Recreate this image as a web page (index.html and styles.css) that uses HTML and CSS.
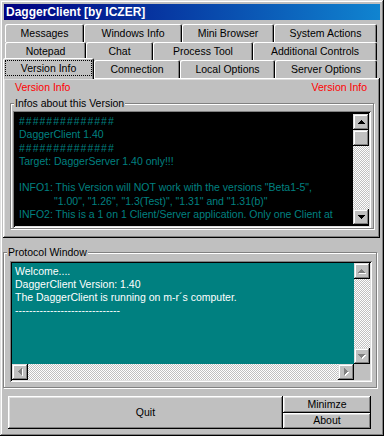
FILE: index.html
```html
<!DOCTYPE html>
<html lang="en">
<head>
    <meta charset="UTF-8">
    <title>DaggerClient [by ICZER]</title>
    <link rel="stylesheet" href="styles.css">
</head>
<body>
    <div class="window">
        <div class="titlebar">DaggerClient [by ICZER]</div>

        <div class="tabs">
            <div class="tab-row row1">
                <div class="tab">Messages</div>
                <div class="tab">Windows Info</div>
                <div class="tab">Mini Browser</div>
                <div class="tab">System Actions</div>
            </div>
            <div class="tab-row row2">
                <div class="tab">Notepad</div>
                <div class="tab">Chat</div>
                <div class="tab">Process Tool</div>
                <div class="tab">Additional Controls</div>
            </div>
            <div class="tab-row row3">
                <div class="tab active"><span class="focus">Version Info</span></div>
                <div class="tab">Connection</div>
                <div class="tab">Local Options</div>
                <div class="tab">Server Options</div>
            </div>
        </div>

        <div class="panel">
            <div class="red-labels">
                <span>Version Info</span>
                <span>Version Info</span>
            </div>
            <fieldset class="group info-group">
                <legend>Infos about this Version</legend>
                <div class="memo info-memo">
                    <div class="memo-text"><span class="hash">##############</span>
DaggerClient 1.40
<span class="hash">##############</span>
Target: DaggerServer 1.40 only!!!

INFO1: This Version will NOT work with the versions "Beta1-5",
            "1.00", "1.26", "1.3(Test)", "1.31" and "1.31(b)"
INFO2: This is a 1 on 1 Client/Server application. Only one Client at</div>
                    <div class="vscroll">
                        <div class="sbtn"><svg width="7" height="4" viewBox="0 0 7 4"><path d="M3 0h1v1h-1z M2 1h3v1h-3z M1 2h5v1h-5z M0 3h7v1h-7z" fill="#000"/></svg></div>
                        <div class="sbtn"></div>
                        <div class="track"></div>
                        <div class="sbtn"><svg width="7" height="4" viewBox="0 0 7 4"><path d="M0 0h7v1h-7z M1 1h5v1h-5z M2 2h3v1h-3z M3 3h1v1h-1z" fill="#000"/></svg></div>
                    </div>
                </div>
            </fieldset>
        </div>

        <fieldset class="group protocol-group">
            <legend>Protocol Window</legend>
            <div class="memo protocol-memo">
                <div class="memo-text">Welcome....
DaggerClient Version: 1.40
The DaggerClient is running on m-r´s computer.
------------------------------</div>
                <div class="vscroll">
                    <div class="sbtn"><svg width="8" height="5" viewBox="0 0 8 5"><path d="M4 1h1v1h-1z M3 2h3v1h-3z M2 3h5v1h-5z M1 4h7v1h-7z" fill="#fff"/><path d="M3 0h1v1h-1z M2 1h3v1h-3z M1 2h5v1h-5z M0 3h7v1h-7z" fill="#808080"/></svg></div>
                    <div class="track"></div>
                    <div class="sbtn"><svg width="8" height="5" viewBox="0 0 8 5"><path d="M1 1h7v1h-7z M2 2h5v1h-5z M3 3h3v1h-3z M4 4h1v1h-1z" fill="#fff"/><path d="M0 0h7v1h-7z M1 1h5v1h-5z M2 2h3v1h-3z M3 3h1v1h-1z" fill="#808080"/></svg></div>
                </div>
                <div class="hscroll">
                    <div class="sbtn"><svg width="5" height="8" viewBox="0 0 5 8"><path d="M1 4h1v1h-1z M2 3h1v3h-1z M3 2h1v5h-1z M4 1h1v7h-1z" fill="#fff"/><path d="M0 3h1v1h-1z M1 2h1v3h-1z M2 1h1v5h-1z M3 0h1v7h-1z" fill="#808080"/></svg></div>
                    <div class="track"></div>
                    <div class="sbtn"><svg width="5" height="8" viewBox="0 0 5 8"><path d="M1 1h1v7h-1z M2 2h1v5h-1z M3 3h1v3h-1z M4 4h1v1h-1z" fill="#fff"/><path d="M0 0h1v7h-1z M1 1h1v5h-1z M2 2h1v3h-1z M3 3h1v1h-1z" fill="#808080"/></svg></div>
                </div>
                <div class="corner"></div>
            </div>
        </fieldset>

        <div class="buttons">
            <div class="btn quit">Quit</div>
            <div class="btn-stack">
                <div class="btn">Minimze</div>
                <div class="btn">About</div>
            </div>
        </div>
    </div>
</body>
</html>
```
FILE: styles.css
```css
* { box-sizing: border-box;}

body {
    margin: 0;
    background: #c0c0c0;
}

.window {
    width: 384px;
    height: 436px;
    padding: 3px;
    display: flex;
    flex-direction: column;
    background: #c0c0c0;
    font-family: "Liberation Sans", Arial, sans-serif;
    font-size: 10.5px;
    line-height: 13px;
    color: #000;
    box-shadow: inset -1px -1px #000, inset 1px 1px #dfdfdf, inset -2px -2px #808080, inset 2px 2px #fff;
}

.titlebar {
    height: 16px;
    margin: 1px 1px 0;
    padding-left: 2px;
    background: linear-gradient(to right, #000080, #1084d0);
    color: #fff;
    font-weight: bold;
    font-size: 12px;
    line-height: 16px;
}

/* tabs */
.tabs {
    margin-top: 4px;
    position: relative;
    z-index: 1;
}

.tab-row {
    display: flex;
    height: 18px;
    padding: 0 4px 0 2px;
}

.tab {
    flex: none;
    height: 18px;
    text-align: center;
    line-height: 18px;
    white-space: nowrap;
    background: #c0c0c0;
    border-radius: 2px 2px 0 0;
    box-shadow: inset 1px 1px #fff, inset -1px 0 #000, inset -2px 0 #808080;
}

.row1 .tab:nth-child(1) { width: 79px;}
.row1 .tab:nth-child(2) { width: 98px;}
.row1 .tab:nth-child(3) { width: 92px;}
.row1 .tab:nth-child(4) { width: 103px;}

.row2 .tab:nth-child(1) { width: 81px;}
.row2 .tab:nth-child(2) { width: 67px;}
.row2 .tab:nth-child(3) { width: 100px;}
.row2 .tab:nth-child(4) { width: 124px;}

.row3 .tab:nth-child(1) { width: 91px;}
.row3 .tab:nth-child(2) { width: 86px;}
.row3 .tab:nth-child(3) { width: 95px;}
.row3 .tab:nth-child(4) { width: 102px;}

.tab.active {
    height: 21px;
    margin: -2px 0 0 -2px;
    padding: 2px 2px 0;
    line-height: 15px;
}

.tab .focus {
    display: block;
    height: 16px;
    border: 1px dotted #000;
}

/* page */
.panel {
    height: 160px;
    margin-right: 1px;
    display: flex;
    flex-direction: column;
    box-shadow: inset -1px -1px #000, inset 1px 1px #fff, inset -2px -2px #808080, inset 2px 2px #dfdfdf;
}

.red-labels {
    display: flex;
    justify-content: space-between;
    margin-top: 3px;
    padding: 0 13px 0 12px;
    color: #f00;
}

.group {
    margin: 0;
    padding: 0;
    min-width: 0;
    border: 1px solid #808080;
    box-shadow: inset 1px 1px #fff, 1px 1px #fff;
}

.group legend {
    padding: 0 1px;
    margin-left: 3px;
    background: #c0c0c0;
}

.info-group {
    margin: 3px 6px 0 7px;
}

.memo {
    display: flex;
    box-shadow: inset 1px 1px #808080, inset -1px -1px #fff, inset 2px 2px #000, inset -2px -2px #dfdfdf;
    padding: 2px;
}

.memo-text {
    flex: 1;
    overflow: hidden;
    white-space: pre;
}

.hash { letter-spacing: 1px;}

.info-memo {
    height: 117px;
    margin: 1px 2px 0 2px;
    background: #000;
    color: #008080;
    line-height: 13.3px;
}

.info-memo .memo-text {
    padding: 2px 4px;
}

.info-memo .vscroll {
    margin: 1px 0;
}

.vscroll {
    width: 16px;
    display: flex;
    flex-direction: column;
}

.sbtn {
    width: 16px;
    height: 16px;
    display: flex;
    align-items: center;
    justify-content: center;
    background: #c0c0c0;
    box-shadow: inset -1px -1px #000, inset 1px 1px #dfdfdf, inset -2px -2px #808080, inset 2px 2px #fff;
}

.sbtn svg { display: block; shape-rendering: crispEdges;}

.track {
    flex: 1;
    background: repeating-conic-gradient(#fff 0 25%, #c0c0c0 0 50%) 0 0 / 2px 2px;
}

/* protocol */
.protocol-group {
    margin: 8px 4px 0 0;
}

.protocol-memo {
    display: grid;
    grid-template-columns: 1fr 16px;
    grid-template-rows: 1fr 16px;
    height: 121px;
    margin: 2px 4px 5px 6px;
    background: #008080;
    color: #fff;
}

.protocol-memo .memo-text {
    padding: 2px 3px;
}

.hscroll {
    display: flex;
}

.corner { background: #c0c0c0;}

/* buttons */
.buttons {
    display: flex;
    margin: 8px 10px 0 5px;
    height: 33px;
}

.btn {
    display: flex;
    align-items: center;
    justify-content: center;
    box-shadow: inset -1px -1px #000, inset 1px 1px #fff, inset -2px -2px #808080, inset 2px 2px #dfdfdf;
}

.quit { flex: 1;}

.btn-stack {
    width: 88px;
    display: flex;
    flex-direction: column;
}

.btn-stack .btn { flex: 1;}
```
